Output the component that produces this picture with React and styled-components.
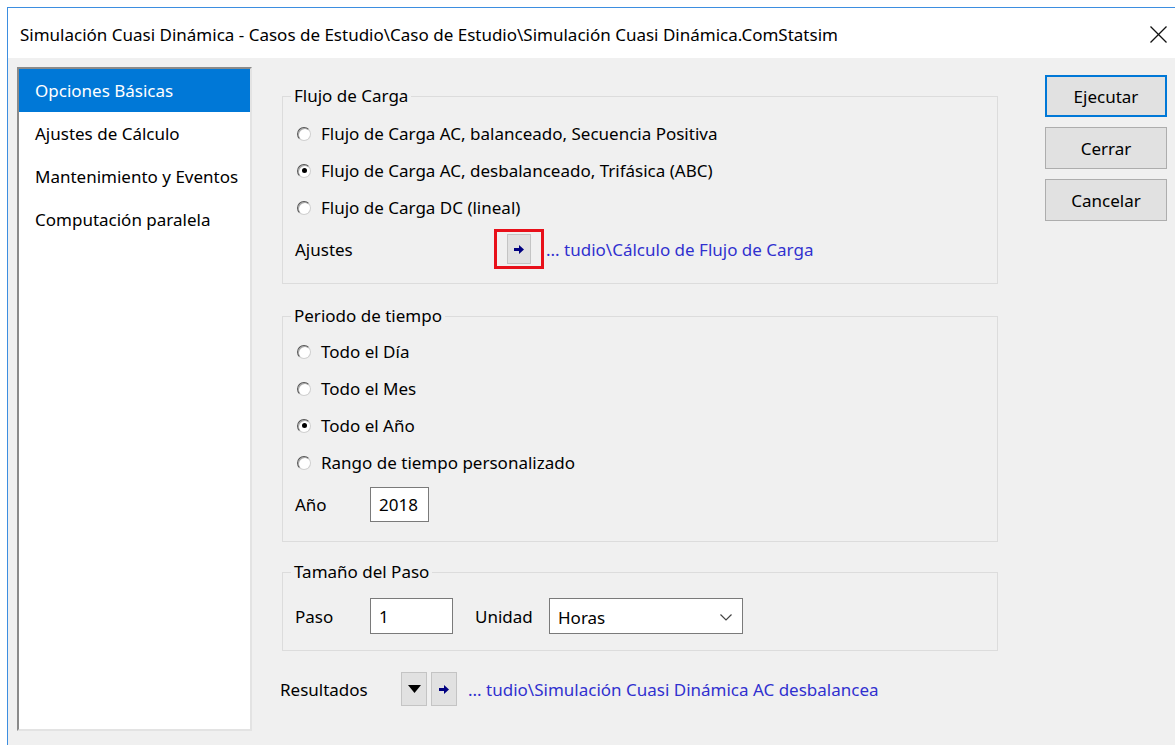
import React from 'react';
import styled, { createGlobalStyle } from 'styled-components';

const GlobalStyle = createGlobalStyle`
  html, body {
    margin: 0;
    padding: 0;
    background: #ffffff;
    overflow: hidden;
  }
  body {
    font-family: "Noto Sans", "Open Sans", sans-serif;
    font-size: 17px;
    color: #000;
  }
`;

const sections = [
  'Opciones Básicas',
  'Ajustes de Cálculo',
  'Mantenimiento y Eventos',
  'Computación paralela',
];

const ArrowIcon = () => (
  <svg width="10" height="9" viewBox="0 0 10 9">
    <polygon points="0,3 5,3 5,0 10,4.5 5,9 5,6 0,6" fill="#000080" />
  </svg>
);

const DownTriangle = () => (
  <svg width="13" height="8" viewBox="0 0 13 8">
    <polygon points="0,0 13,0 6.5,8" fill="#000" />
  </svg>
);

const Chevron = () => (
  <svg width="12" height="7" viewBox="0 0 12 7">
    <polyline points="0.5,0.5 6,6 11.5,0.5" fill="none" stroke="#444" strokeWidth="1.2" />
  </svg>
);

const CloseIcon = () => (
  <svg width="17" height="17" viewBox="0 0 17 17">
    <line x1="0.5" y1="0.5" x2="16.5" y2="16.5" stroke="#111" strokeWidth="1.3" />
    <line x1="16.5" y1="0.5" x2="0.5" y2="16.5" stroke="#111" strokeWidth="1.3" />
  </svg>
);

const Radio = ({ checked, label }) => (
  <RadioRow>
    <RadioCircle>{checked && <RadioDot />}</RadioCircle>
    <span>{label}</span>
  </RadioRow>
);

const App = () => {
  return (
    <>
      <GlobalStyle />
      <Window>
        <TitleBar>
          <Title>
            Simulación Cuasi Dinámica - Casos de Estudio\Caso de Estudio\Simulación Cuasi Dinámica.ComStatsim
          </Title>
          <CloseButton>
            <CloseIcon />
          </CloseButton>
        </TitleBar>

        <Body>
          <Sidebar>
            {sections.map((s, i) => (
              <SidebarItem key={s} $selected={i === 0}>
                {s}
              </SidebarItem>
            ))}
          </Sidebar>

          <Main>
            <Group $gap={8} $bottom={14}>
              <Legend>Flujo de Carga</Legend>
              <Radio label="Flujo de Carga AC, balanceado, Secuencia Positiva" />
              <Radio checked label="Flujo de Carga AC, desbalanceado, Trifásica (ABC)" />
              <Radio label="Flujo de Carga DC (lineal)" />
              <SettingsRow>
                <Label $width={199}>Ajustes</Label>
                <Highlight>
                  <SmallButton $width={24} $height={30}>
                    <ArrowIcon />
                  </SmallButton>
                </Highlight>
                <PathLink>... tudio\Cálculo de Flujo de Carga</PathLink>
              </SettingsRow>
            </Group>

            <Group $gap={6} $bottom={19} $top={21}>
              <Legend>Periodo de tiempo</Legend>
              <Radio label="Todo el Día" />
              <Radio label="Todo el Mes" />
              <Radio checked label="Todo el Año" />
              <Radio label="Rango de tiempo personalizado" />
              <FieldRow $top={6}>
                <Label $width={75}>Año</Label>
                <TextInput $width={59} $height={35}>2018</TextInput>
              </FieldRow>
            </Group>

            <Group $gap={15} $bottom={16} $top={19}>
              <Legend>Tamaño del Paso</Legend>
              <FieldRow>
                <Label $width={75}>Paso</Label>
                <TextInput $width={83} $height={36}>1</TextInput>
                <Label $width={74} $left={22}>Unidad</Label>
                <Select>
                  <span>Horas</span>
                  <Chevron />
                </Select>
              </FieldRow>
            </Group>

            <ResultsRow>
              <Label $width={121}>Resultados</Label>
              <SmallButton $width={26} $height={34}>
                <DownTriangle />
              </SmallButton>
              <SmallButton $width={26} $height={34} $left={4}>
                <ArrowIcon />
              </SmallButton>
              <PathLink $left={11}>... tudio\Simulación Cuasi Dinámica AC desbalancea</PathLink>
            </ResultsRow>
          </Main>

          <Actions>
            <ActionButton $primary>Ejecutar</ActionButton>
            <ActionButton>Cerrar</ActionButton>
            <ActionButton>Cancelar</ActionButton>
          </Actions>
        </Body>
      </Window>
    </>
  );
};

const Window = styled.div`
  display: flex;
  flex-direction: column;
  margin: 7px 0 0 7px;
  height: 738px;
  border-top: 1px solid #3d8ee0;
  border-left: 1px solid #3d8ee0;
  background: #f0f0f0;
`;

const TitleBar = styled.div`
  display: flex;
  align-items: center;
  justify-content: space-between;
  height: 50px;
  padding: 0 7px 0 12px;
  background: #ffffff;
  flex-shrink: 0;
`;

const Title = styled.div`
  white-space: nowrap;
  padding-top: 2px;
`;

const CloseButton = styled.div`
  display: flex;
  align-items: center;
  justify-content: center;
  width: 17px;
  height: 17px;
  margin: 2px 1px 0 0;
`;

const Body = styled.div`
  display: flex;
  align-items: flex-start;
  flex: 1;
  padding: 9px 0 0 9px;
`;

const Sidebar = styled.ul`
  list-style: none;
  margin: 0;
  padding: 0;
  width: 231px;
  height: 660px;
  background: #ffffff;
  border-top: 2px solid #8a8a8a;
  border-left: 2px solid #8a8a8a;
  border-right: 2px solid #e3e3e3;
  border-bottom: 2px solid #e3e3e3;
  flex-shrink: 0;
`;

const SidebarItem = styled.li`
  display: flex;
  align-items: center;
  height: 43px;
  padding-left: 16px;
  background: ${(p) => (p.$selected ? '#0078d7' : 'transparent')};
  color: ${(p) => (p.$selected ? '#ffffff' : '#000')};
`;

const Main = styled.div`
  display: flex;
  flex-direction: column;
  width: 716px;
  margin-left: 30px;
  padding-top: 18px;
  flex-shrink: 0;
`;

const Group = styled.fieldset`
  display: flex;
  flex-direction: column;
  margin: ${(p) => p.$top || 0}px 0 0 0;
  padding: ${(p) => p.$gap}px 12px ${(p) => p.$bottom}px 12px;
  border: 1px solid #dcdcdc;
  min-width: 0;
`;

const Legend = styled.legend`
  padding: 0 3px;
  margin-left: -4px;
  line-height: 22px;
`;

const RadioRow = styled.label`
  display: flex;
  align-items: center;
  height: 37px;
  gap: 10px;
  padding-left: 2px;
`;

const RadioCircle = styled.span`
  display: flex;
  align-items: center;
  justify-content: center;
  box-sizing: border-box;
  width: 14px;
  height: 14px;
  border-radius: 50%;
  background: #ffffff;
  border: 1px solid;
  border-color: #555555 #cfcfcf #cfcfcf #555555;
  box-shadow: inset 1px 1px 0 #a8a8a8;
`;

const RadioDot = styled.span`
  width: 5px;
  height: 5px;
  border-radius: 50%;
  background: #000;
`;

const SettingsRow = styled.div`
  display: flex;
  align-items: center;
  margin-top: 3px;
`;

const FieldRow = styled.div`
  display: flex;
  align-items: center;
  margin-top: ${(p) => p.$top || 0}px;
`;

const Label = styled.span`
  width: ${(p) => p.$width}px;
  margin-left: ${(p) => p.$left || 0}px;
  flex-shrink: 0;
`;

const Highlight = styled.div`
  display: flex;
  padding: 2px 10px;
  border: 3px solid #e8101a;
`;

const SmallButton = styled.div`
  display: flex;
  align-items: center;
  justify-content: center;
  box-sizing: border-box;
  width: ${(p) => p.$width}px;
  height: ${(p) => p.$height}px;
  margin-left: ${(p) => p.$left || 0}px;
  background: #e1e1e1;
  border: 1px solid #c4c4c4;
`;

const PathLink = styled.span`
  margin-left: ${(p) => p.$left || 2}px;
  color: #3030cf;
  white-space: nowrap;
`;

const TextInput = styled.div`
  display: flex;
  align-items: center;
  box-sizing: border-box;
  width: ${(p) => p.$width}px;
  height: ${(p) => p.$height}px;
  padding-left: 8px;
  background: #ffffff;
  border: 1px solid #7a7a7a;
`;

const Select = styled.div`
  display: flex;
  align-items: center;
  justify-content: space-between;
  box-sizing: border-box;
  width: 194px;
  height: 36px;
  padding: 2px 10px 0 8px;
  background: #ffffff;
  border: 1px solid #7a7a7a;
`;

const ResultsRow = styled.div`
  display: flex;
  align-items: center;
  margin: 21px 0 0 -2px;
`;

const Actions = styled.div`
  display: flex;
  flex-direction: column;
  gap: 10px;
  margin-left: 47px;
  padding-top: 8px;
`;

const ActionButton = styled.div`
  display: flex;
  align-items: center;
  justify-content: center;
  box-sizing: border-box;
  width: 122px;
  height: 42px;
  background: #e1e1e1;
  border: ${(p) => (p.$primary ? '2px solid #0078d7' : '1px solid #adadad')};
`;

export default App;
